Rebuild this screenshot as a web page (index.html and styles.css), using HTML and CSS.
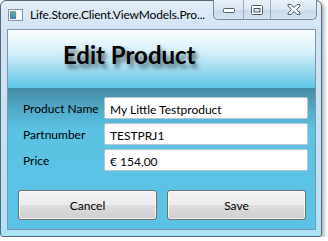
FILE: index.html
```html
<!DOCTYPE html>
<html lang="en">

<head>
    <meta charset="UTF-8">
    <title>Edit Product</title>
    <link rel="stylesheet" href="styles.css">
</head>

<body>
    <div class="window">
        <!-- Title bar -->
        <div class="titlebar">
            <svg class="app-icon" width="15" height="12" viewBox="0 0 15 12">
                <defs>
                    <linearGradient id="pane" x1="0" y1="0" x2="0" y2="1">
                        <stop offset="0" stop-color="#6fae9a" />
                        <stop offset="1" stop-color="#3f7fb8" />
                    </linearGradient>
                </defs>
                <rect x="0.5" y="0.5" width="14" height="11" fill="#f4f6f8" stroke="#8a97a4" />
                <rect x="2" y="2" width="6" height="8" fill="url(#pane)" />
                <rect x="9" y="2" width="4" height="8" fill="#ffffff" />
            </svg>
            <span class="title">Life.Store.Client.ViewModels.Pro...</span>
            <div class="caption-buttons">
                <div class="cap-btn cap-min">
                    <svg width="12" height="6" viewBox="0 0 12 6">
                        <rect x="0.5" y="0.5" width="11" height="4" rx="1" fill="#fff" stroke="#4b5b6b" />
                    </svg>
                </div>
                <div class="cap-btn cap-max">
                    <svg width="12" height="10" viewBox="0 0 12 10">
                        <rect x="0.5" y="0.5" width="11" height="9" rx="1" fill="#fff" stroke="#4b5b6b" />
                        <rect x="3" y="3.5" width="6" height="3.5" fill="#dfe6ec" stroke="#4b5b6b" />
                    </svg>
                </div>
                <div class="cap-btn cap-close">
                    <svg width="14" height="11" viewBox="0 0 14 11">
                        <path d="M1 0.5h3l3 3 3-3h3v1.5l-3.5 3.5 3.5 3.5v1.5h-3l-3-3-3 3h-3v-1.5l3.5-3.5-3.5-3.5z"
                            fill="#fff" stroke="#4b5b6b" stroke-width="1" stroke-linejoin="round" />
                    </svg>
                </div>
            </div>
        </div>

        <!-- Client area -->
        <div class="client">
            <div class="header">
                <h1>Edit Product</h1>
            </div>
            <div class="form">
                <div class="fields">
                    <label>Product Name</label>
                    <div class="textbox">My Little Testproduct</div>
                    <label>Partnumber</label>
                    <div class="textbox">TESTPRJ1</div>
                    <label>Price</label>
                    <div class="textbox">€ 154,00</div>
                </div>
                <div class="actions">
                    <button>Cancel</button>
                    <button>Save</button>
                </div>
            </div>
        </div>
    </div>
</body>

</html>
```

FILE: styles.css
```css
body {
    margin: 0;
    background-color: #ffffff;
    font-family: 'Lato', 'Open Sans', sans-serif;
    font-size: 12px;
    color: #000;
}

.window {
    box-sizing: border-box;
    width: 322px;
    height: 237px;
    padding: 0 5px 6px 6px;
    border: 1px solid #55677a;
    border-radius: 6px 6px 3px 3px;
    background: linear-gradient(180deg, #e2edf7 0, #d2e4f3 28px, #bfe0f1 80%, #a9e3f6 100%);
    box-shadow: 2px 2px 4px rgba(0, 0, 0, 0.35);
    display: flex;
    flex-direction: column;
}

/* Title bar */
.titlebar {
    height: 28px;
    display: flex;
    align-items: flex-start;
}

.app-icon {
    flex-shrink: 0;
    margin: 8px 7px 0 1px;
}

.title {
    min-width: 0;
    overflow: hidden;
    margin-top: 6px;
    white-space: nowrap;
    letter-spacing: -0.15px;
}

.caption-buttons {
    flex-shrink: 0;
    margin-left: auto;
    margin-right: -1px;
    margin-top: -1px;
    display: flex;
    height: 19px;
    border: 1px solid #7a8a9a;
    border-top: none;
    border-radius: 0 0 5px 5px;
    overflow: hidden;
    background: linear-gradient(180deg, #e9f1f8 0, #dae6f1 50%, #c9d9e8 51%, #d6e4f0 100%);
}

.cap-btn {
    display: flex;
    align-items: center;
    justify-content: center;
    border-left: 1px solid #9aabbd;
}

.cap-btn:first-child {
    border-left: none;
}

.cap-min {
    width: 29px;
    padding-top: 3px;
    box-sizing: border-box;
}

.cap-max {
    width: 26px;
}

.cap-close {
    width: 45px;
}

/* Client area */
.client {
    flex: 1;
    display: flex;
    flex-direction: column;
    border: 1px solid #7e95a9;
    background: #5bc3e5;
}

.header {
    height: 58px;
    background: linear-gradient(180deg, #fdfeff 0, #d3eff9 40%, #5ec4e6 100%);
}

.header h1 {
    margin: 0;
    padding: 10px 0 0 55px;
    font-family: 'Lato', sans-serif;
    font-size: 24px;
    font-weight: bold;
    line-height: 30px;
    color: #000;
    text-shadow: 3px 4px 4px rgba(0, 0, 0, 0.55);
}

.form {
    flex: 1;
    display: flex;
    flex-direction: column;
    padding: 9px 9px 9px 10px;
    background: linear-gradient(180deg, #458ba4 0, #52abc9 22px, #5bc2e4 42px, #5bc3e5 100%);
}

.fields {
    display: grid;
    grid-template-columns: 81px 1fr;
    grid-auto-rows: 22px;
    row-gap: 4px;
    padding-left: 5px;
    margin-right: -2px;
}

.fields label {
    display: flex;
    align-items: center;
    padding-top: 1px;
}

.textbox {
    box-sizing: border-box;
    border: 1px solid #b9c6cf;
    border-radius: 2px;
    background: #fff;
    padding: 2px 0 0 5px;
    display: flex;
    align-items: center;
    white-space: nowrap;
}

.actions {
    margin-top: 19px;
    display: grid;
    grid-template-columns: 1fr 1fr;
    column-gap: 10px;
}

.actions button {
    height: 30px;
    font-family: 'Lato', 'Open Sans', sans-serif;
    font-size: 12px;
    color: #000;
    border: 1px solid #707070;
    border-radius: 3px;
    background: linear-gradient(180deg, #f3f3f3 0, #ebebeb 50%, #dddddd 51%, #cfcfcf 100%);
    box-shadow: inset 0 0 0 1px rgba(255, 255, 255, 0.7);
    padding: 0;
}
```
